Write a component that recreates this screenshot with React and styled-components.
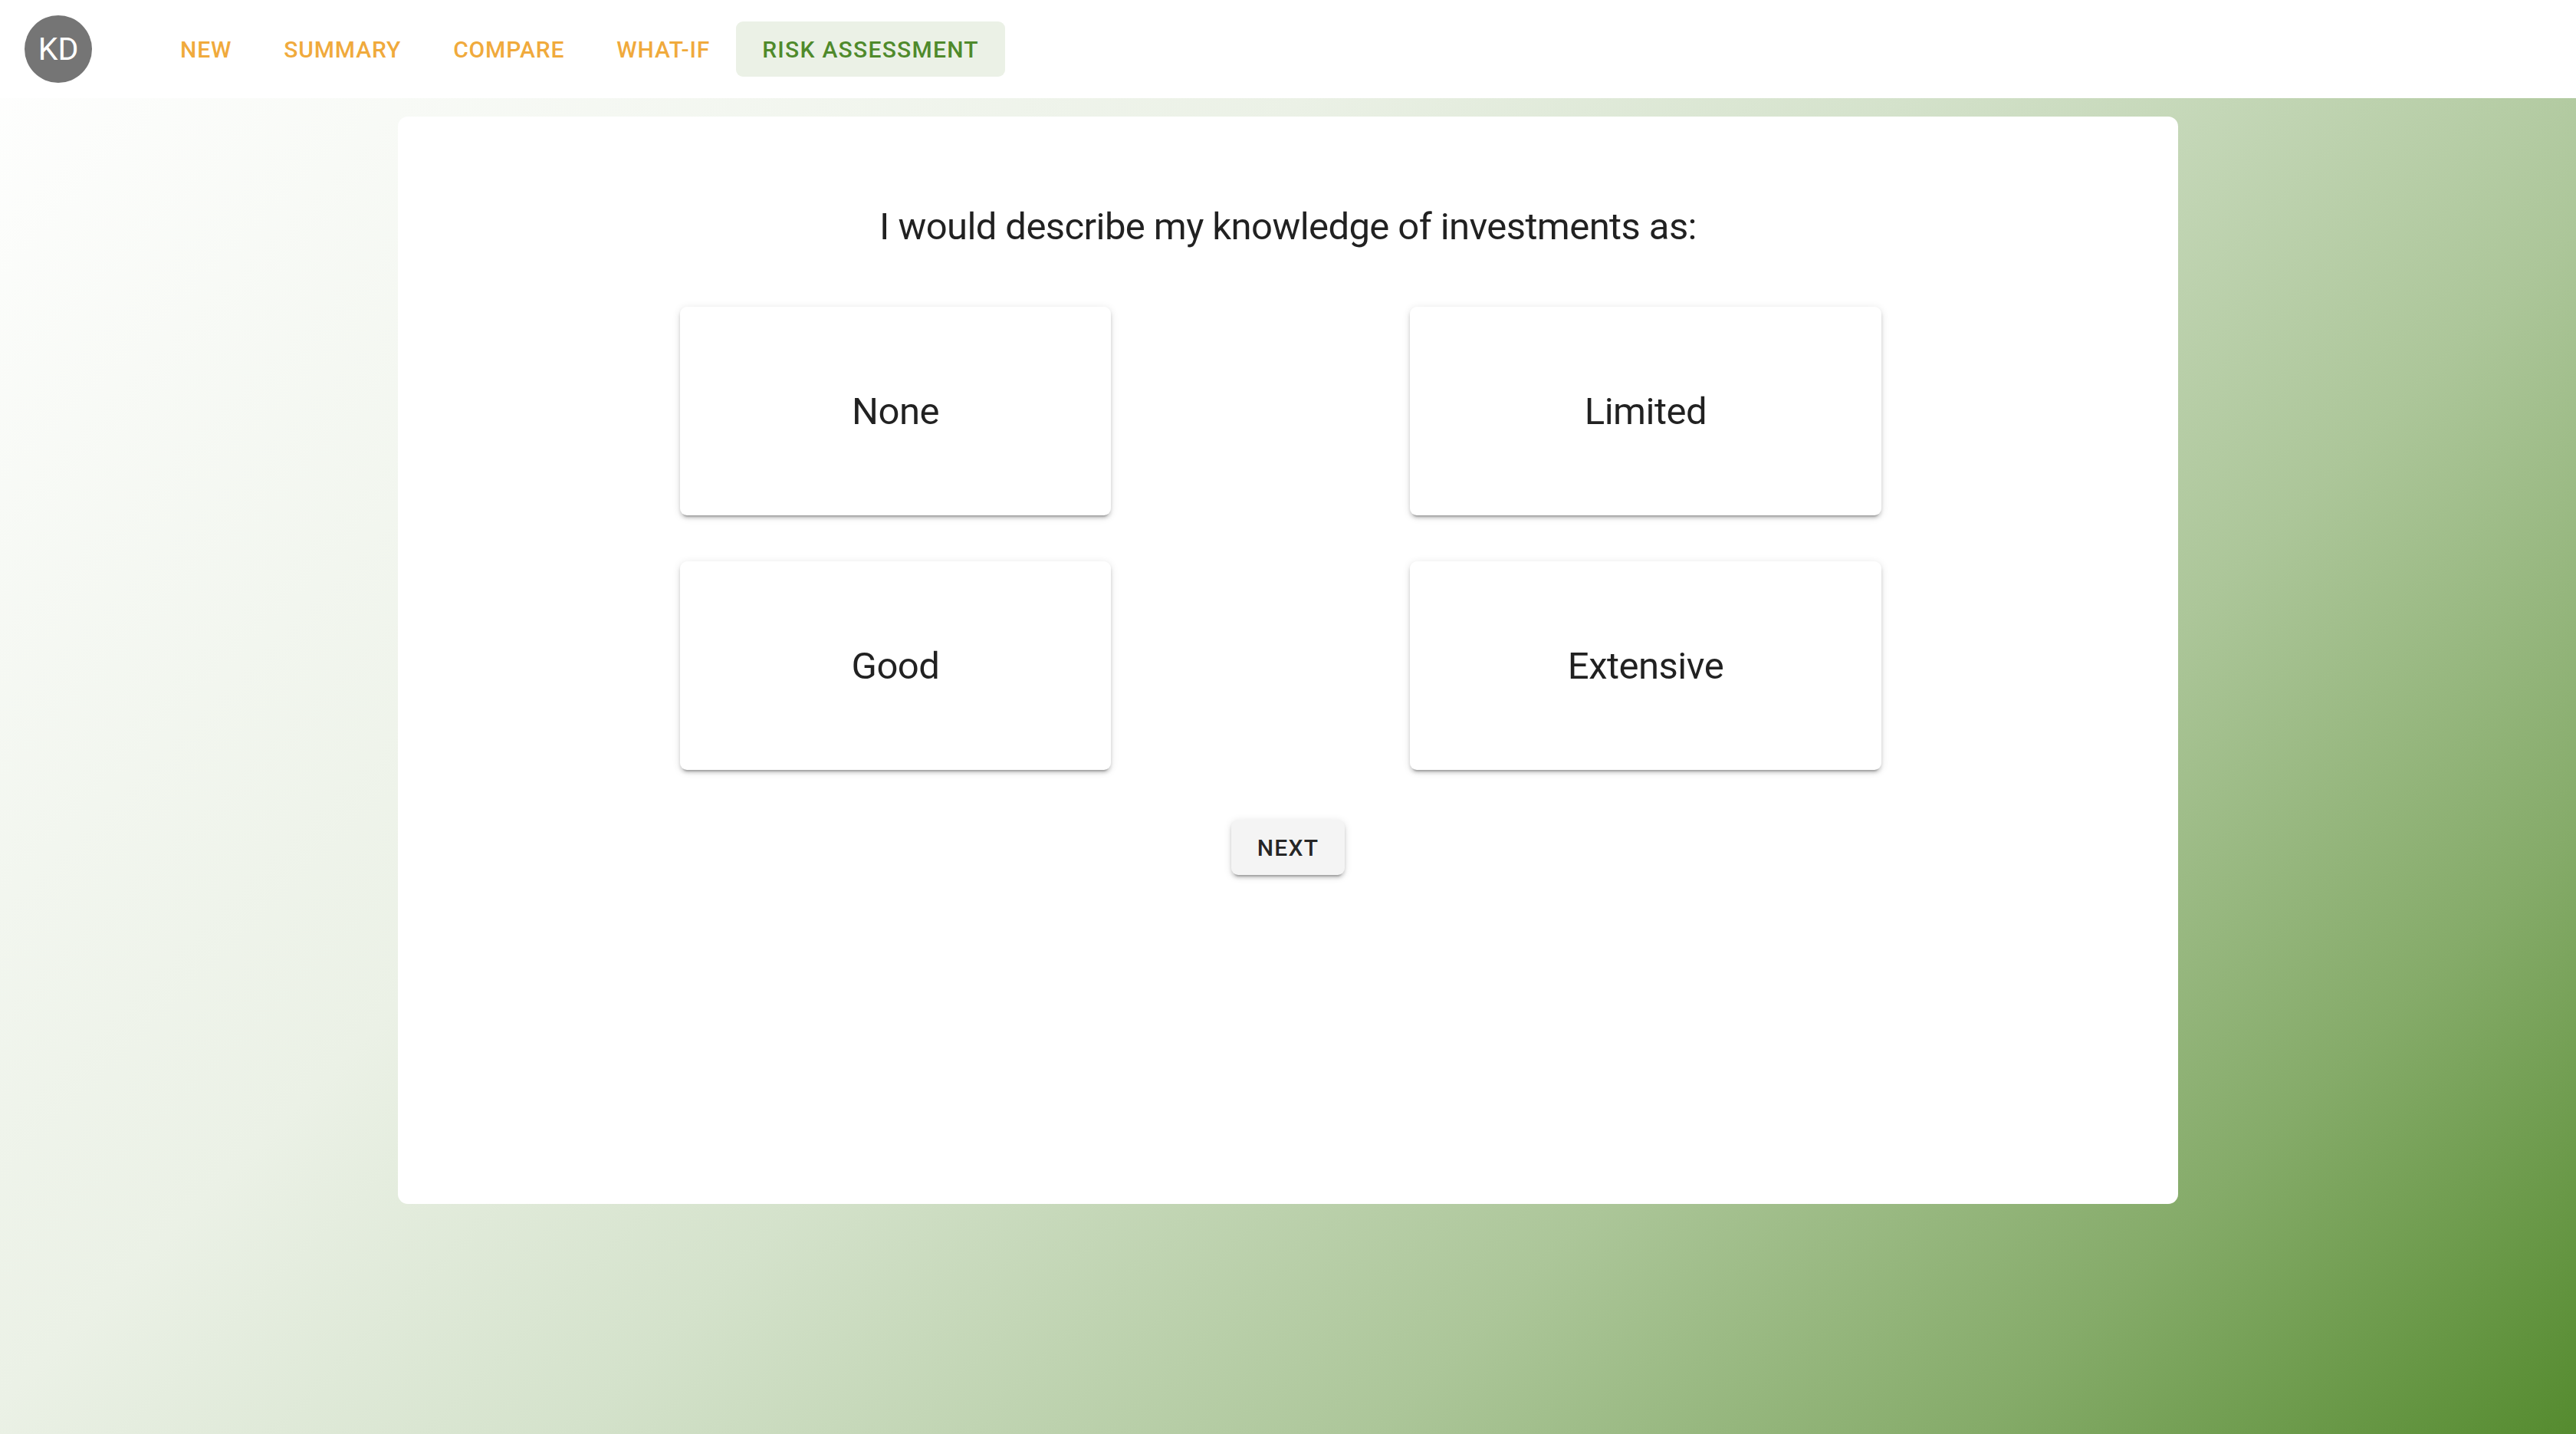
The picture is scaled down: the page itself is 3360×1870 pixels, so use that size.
import React from "react";
import styled, { createGlobalStyle } from "styled-components";

const GlobalStyle = createGlobalStyle`
  html, body {
    margin: 0;
    padding: 0;
  }
  body {
    font-family: Roboto, "Liberation Sans", Arial, sans-serif;
    color: rgba(0, 0, 0, 0.87);
  }
  * { box-sizing: border-box; }
`;

const Page = styled.div`
  min-height: 100vh;
  display: flex;
  flex-direction: column;
  background: linear-gradient(
    135deg,
    #ffffff 0%,
    #ebf1e6 35%,
    #d4e2cb 50%,
    #acc699 70%,
    #85ab69 85%,
    #558b2f 100%
  );
`;

const Header = styled.header`
  height: 128px;
  background: #ffffff;
  display: flex;
  align-items: center;
  padding-left: 32px;
`;

const Avatar = styled.div`
  width: 88px;
  height: 88px;
  border-radius: 50%;
  background: #757575;
  color: #ffffff;
  display: flex;
  align-items: center;
  justify-content: center;
  font-size: 41px;
  font-weight: 400;
  margin-right: 81px;
`;

const Nav = styled.nav`
  display: flex;
  align-items: center;
`;

const NavButton = styled.button`
  height: 72px;
  padding: 0 34px;
  border: none;
  border-radius: 9px;
  font-family: Roboto, "Liberation Sans", Arial, sans-serif;
  font-size: 30px;
  font-weight: 500;
  letter-spacing: ${(p) => (p.$active ? "0.042em" : "0.02857em")};
  text-transform: uppercase;
  cursor: pointer;
  color: ${(p) => (p.$active ? "#4f8a2b" : "#f0aa3c")};
  background: ${(p) => (p.$active ? "#ebf1e6" : "transparent")};
`;

const Main = styled.main`
  display: flex;
  justify-content: center;
  padding-top: 24px;
`;

const Card = styled.section`
  width: 2322px;
  height: 1418px;
  background: #ffffff;
  border-radius: 13px;
  display: flex;
  flex-direction: column;
  align-items: center;
  padding-top: 111px;
`;

const Question = styled.h2`
  margin: 0;
  font-size: 49px;
  line-height: 66px;
  font-weight: 400;
  letter-spacing: -0.012em;
  color: rgba(0, 0, 0, 0.87);
  text-align: center;
`;

const Options = styled.div`
  margin-top: 71px;
  display: grid;
  grid-template-columns: 562px 615px;
  column-gap: 390px;
  row-gap: 60px;
  padding-right: 19px;
`;

const Option = styled.button`
  height: 272px;
  border: none;
  background: #ffffff;
  border-radius: 9px;
  box-shadow: 0 6px 2px -4px rgba(0, 0, 0, 0.2), 0 4px 4px 0 rgba(0, 0, 0, 0.14),
    0 2px 11px 0 rgba(0, 0, 0, 0.12);
  display: flex;
  align-items: center;
  justify-content: center;
  font-family: Roboto, "Liberation Sans", Arial, sans-serif;
  font-size: 49px;
  font-weight: 400;
  letter-spacing: -0.01em;
  color: rgba(0, 0, 0, 0.87);
  cursor: pointer;
`;

const NextButton = styled.button`
  margin-top: 65px;
  height: 72px;
  padding: 0 34px;
  border: none;
  border-radius: 9px;
  background: #f4f4f4;
  box-shadow: 0 6px 2px -4px rgba(0, 0, 0, 0.2), 0 4px 4px 0 rgba(0, 0, 0, 0.14),
    0 2px 11px 0 rgba(0, 0, 0, 0.12);
  font-family: Roboto, "Liberation Sans", Arial, sans-serif;
  font-size: 30px;
  font-weight: 500;
  letter-spacing: 0.04em;
  color: rgba(0, 0, 0, 0.87);
  text-transform: uppercase;
  cursor: pointer;
`;

const navItems = ["New", "Summary", "Compare", "What-If", "Risk Assessment"];
const options = ["None", "Limited", "Good", "Extensive"];

export default function App() {
  return (
    <>
      <GlobalStyle />
      <Page>
        <Header>
          <Avatar>KD</Avatar>
          <Nav>
            {navItems.map((n) => (
              <NavButton key={n} $active={n === "Risk Assessment"}>
                {n}
              </NavButton>
            ))}
          </Nav>
        </Header>
        <Main>
          <Card>
            <Question>I would describe my knowledge of investments as:</Question>
            <Options>
              {options.map((o) => (
                <Option key={o}>{o}</Option>
              ))}
            </Options>
            <NextButton>Next</NextButton>
          </Card>
        </Main>
      </Page>
    </>
  );
}
